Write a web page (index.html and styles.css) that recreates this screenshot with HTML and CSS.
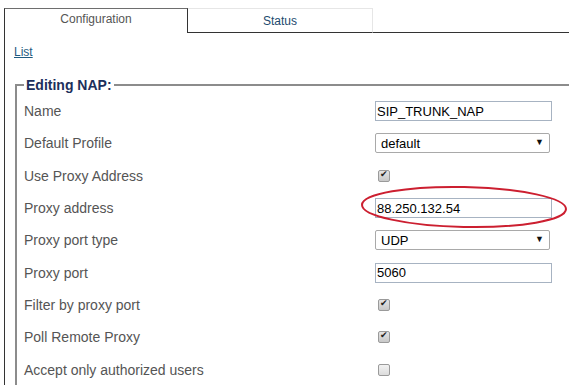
FILE: index.html
```html
<!DOCTYPE html>
<html lang="en">
<head>
    <meta charset="UTF-8">
    <title>NAP Configuration</title>
    <link rel="stylesheet" href="styles.css">
</head>
<body>
    <div class="page">
        <div class="tabs">
            <div class="tab active">Configuration</div>
            <div class="tab">Status</div>
            <div class="tab-rest"></div>
        </div>

        <div class="panel">
            <a class="back" href="#">List</a>

            <fieldset class="editor">
                <legend>Editing NAP:</legend>

                <div class="row">
                    <label>Name</label>
                    <input class="field" type="text" value="SIP_TRUNK_NAP">
                </div>
                <div class="row">
                    <label>Default Profile</label>
                    <span class="select-wrap">
                        <select class="field select"><option>default</option></select>
                    </span>
                </div>
                <div class="row">
                    <label>Use Proxy Address</label>
                    <input class="check" type="checkbox" checked>
                </div>
                <div class="row">
                    <label>Proxy address</label>
                    <input class="field" type="text" value="88.250.132.54">
                </div>
                <div class="row">
                    <label>Proxy port type</label>
                    <span class="select-wrap">
                        <select class="field select"><option>UDP</option></select>
                    </span>
                </div>
                <div class="row">
                    <label>Proxy port</label>
                    <input class="field" type="text" value="5060">
                </div>
                <div class="row">
                    <label>Filter by proxy port</label>
                    <input class="check" type="checkbox" checked>
                </div>
                <div class="row">
                    <label>Poll Remote Proxy</label>
                    <input class="check" type="checkbox" checked>
                </div>
                <div class="row">
                    <label>Accept only authorized users</label>
                    <input class="check" type="checkbox">
                </div>
            </fieldset>
        </div>

        <!-- hand drawn highlight round the proxy address -->
        <svg class="highlight" width="208" height="46" viewBox="0 0 208 46">
            <ellipse cx="104" cy="22" rx="102" ry="20" transform="rotate(1.2 104 22)"
                     fill="none" stroke="#cc1f30" stroke-width="2"/>
        </svg>
    </div>
</body>
</html>
```

FILE: styles.css
```css
* {
    box-sizing: border-box;
}

html, body {
    height: 100%;
}

body {
    margin: 0;
    background: #ffffff;
    font-family: "Liberation Sans", Arial, sans-serif;
    overflow: hidden;
}

.page {
    position: relative;
    height: 100%;
    display: flex;
    flex-direction: column;
    padding: 8px 0 0 4px;
}

.tabs {
    display: flex;
    height: 25px;
    font-size: 12px;
}

.tab {
    width: 185px;
    border-top: 1px solid #e6e6e6;
    border-right: 1px solid #e6e6e6;
    border-bottom: 1px solid #333333;
    color: #1d4a6e;
    text-align: center;
    padding-top: 5px;
}

.tab.active {
    width: 184px;
    border: 1px solid #333333;
    border-top-color: #6e6e6e;
    border-bottom: none;
    color: #555555;
    padding-top: 3px;
}

.tab-rest {
    flex: 1;
    border-bottom: 1px solid #333333;
}

/* panel runs off the bottom and right of the shot */
.panel {
    flex: 1;
    overflow: hidden;
    border-left: 1px solid #333333;
    padding: 12px 0 0 9px;
}

.back {
    display: block;
    font-size: 12px;
    color: #1e5a80;
    margin-bottom: 18px;
}

.editor {
    margin: 0 0 0 1px;
    padding: 2px 0 0 7px;
    border: 2px solid #8c8c8c;
    border-right: none;
    border-bottom: none;
}

.editor legend {
    padding: 0 2px;
    font-size: 14px;
    font-weight: bold;
    color: #1c2f5c;
}

.row {
    display: grid;
    grid-template-columns: 351px 177px;
    align-items: center;
    height: 32.3px;
}

.row label {
    font-size: 14px;
    color: #555555;
}

.field {
    width: 177px;
    height: 20px;
    margin: 0;
    padding: 0 1px;
    border: 1px solid #a7b3c2;
    font-family: "Liberation Sans", Arial, sans-serif;
    font-size: 13px;
    color: #000000;
    background: #ffffff;
}

.select-wrap {
    position: relative;
    width: 175px;
}

.select {
    width: 175px;
    padding-left: 5px;
    border: 1px solid #a9a9a9;
    border-radius: 2px;
    appearance: none;
}

.select-wrap::after {
    content: "▼";
    position: absolute;
    right: 6px;
    top: 4px;
    font-size: 9px;
    color: #111111;
    pointer-events: none;
}

.check {
    appearance: none;
    width: 12px;
    height: 12px;
    margin: 0 0 0 3px;
    border: 1px solid #9a9a9a;
    border-radius: 2px;
    background: linear-gradient(#f2f2f2, #dcdcdc);
    position: relative;
}

.check:checked {
    background: linear-gradient(#e4e4e4, #c8c8c8);
}

.check:checked::after {
    content: "✔";
    position: absolute;
    left: 1px;
    top: -2px;
    font-size: 9px;
    color: #222222;
}

.highlight {
    position: absolute;
    left: 360px;
    top: 185px;
}
```
